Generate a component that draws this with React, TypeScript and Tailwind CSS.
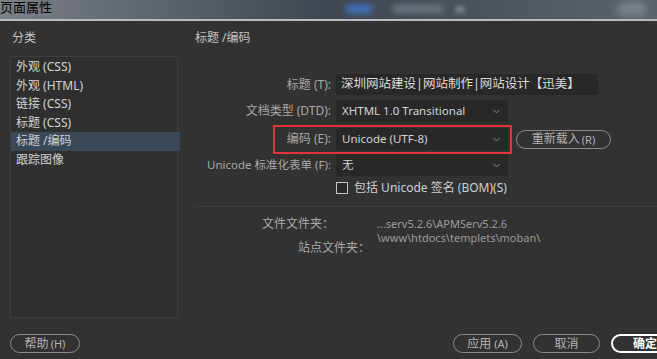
import { ChevronDown } from "lucide-react"

const font = { fontFamily: '"Noto Sans", "Noto Sans CJK SC", sans-serif' }

const categories = ["外观 (CSS)", "外观 (HTML)", "链接 (CSS)", "标题 (CSS)", "标题 /编码", "跟踪图像"]

function Select({ value, width }: { value: string; width: string }) {
  return (
    <div className={`flex h-[22px] items-center justify-between bg-[#282828] pl-[6px] pr-[6px] text-[11.5px] text-[#d4d4d4] ${width}`}>
      <span>{value}</span>
      <ChevronDown size={11} strokeWidth={2} className="text-[#8d9aa6]" />
    </div>
  )
}

function Pill({ children, w, strong }: { children: React.ReactNode; w: string; strong?: boolean }) {
  return (
    <div
      className={`flex h-[19px] items-center justify-center rounded-full text-[12px] leading-none ${w} ${
        strong ? "border-2 border-white font-semibold text-white" : "border border-[#8a8a8a] text-[#b4b4b4]"
      }`}
    >
      {children}
    </div>
  )
}

export default function App() {
  return (
    <div className="flex h-[359px] w-[657px] flex-col overflow-hidden bg-[#323232]" style={font}>
      {/* blurred window title bar */}
      <div className="relative h-[21px] shrink-0 overflow-hidden border-b-2 border-[#b8bcc2] bg-gradient-to-r from-[#7c8188] via-[#3f464f] to-[#5d636b]">
        <div className="absolute left-[345px] top-[4px] h-[10px] w-[28px] rounded-full bg-[#3f6fb8] blur-[3px]" />
        <div className="absolute left-[392px] top-[5px] h-[8px] w-[52px] rounded-full bg-[#6e7680] blur-[3px]" />
        <div className="absolute left-[455px] top-[6px] h-[7px] w-[10px] rounded-full bg-[#7a828a] blur-[2px]" />
        <div className="absolute right-[10px] top-[2px] h-[14px] w-[30px] rounded-full bg-[#7d848c] blur-[4px]" />
        <span className="relative block text-[13px] leading-[15px] text-black">页面属性</span>
      </div>

      <div className="flex flex-1">
        {/* categories */}
        <div className="flex w-[190px] shrink-0 flex-col pl-[10px] pt-[9px]">
          <div className="pl-[2px] text-[12px] leading-[16px] text-[#c4c4c4]">分类</div>
          <div className="mt-[10px] h-[262px] w-[168px] border border-[#3e3e3e] bg-[#2f2f2f] pt-[1px]">
            {categories.map((c) => (
              <div
                key={c}
                className={`h-[18.6px] pl-[5px] text-[12px] leading-[18.6px] text-[#d2d2d2] ${
                  c === "标题 /编码" ? "-mr-[3px] bg-[#3a4858]" : ""
                }`}
              >
                {c}
              </div>
            ))}
          </div>
        </div>

        {/* title / encoding */}
        <div className="flex flex-1 flex-col pl-[5px] pt-[9px]">
          <div className="text-[12px] leading-[16px] text-[#c4c4c4]">标题 /编码</div>

          <div className="mt-[28px] flex flex-col text-[12px] text-[#a8a8a8]">
            <div className="flex items-center">
              <span className="w-[141px] pr-[5px] text-right">标题 (T):</span>
              <div className="flex h-[21px] w-[262px] items-center bg-[#282828] pl-[5px] text-[12.5px] text-[#dcdcdc]">
                深圳网站建设|网站制作|网站设计【迅美】
              </div>
            </div>

            <div className="mt-[5px] flex items-center">
              <span className="w-[141px] pr-[5px] text-right">文档类型 (DTD):</span>
              <Select value="XHTML 1.0 Transitional" width="w-[172px]" />
            </div>

            <div className="relative mt-[6px] flex items-center">
              <div className="pointer-events-none absolute left-[78px] -top-[3px] h-[29px] w-[239px] border-2 border-[#e2323c]" />
              <span className="w-[141px] pr-[5px] text-right">编码 (E):</span>
              <Select value="Unicode (UTF-8)" width="w-[172px]" />
              <div className="ml-[8px]">
                <Pill w="w-[95px]">
                  重新载入 <span className="ml-[2px] text-[11px]">(R)</span>
                </Pill>
              </div>
            </div>

            <div className="mt-[4px] flex items-center">
              <span className="w-[141px] whitespace-nowrap pr-[5px] text-right text-[11.5px]">Unicode 标准化表单 (F):</span>
              <Select value="无" width="w-[172px]" />
            </div>

            <div className="mt-[3px] flex items-center pl-[141px] text-[#d0d0d0]">
              <div className="h-[12px] w-[12px] border border-[#c8c8c8] bg-[#2a2a2a]" />
              <span className="ml-[6px]">包括 Unicode 签名 (BOM)(S)</span>
            </div>
          </div>

          <div className="mt-[9px] h-px bg-[#3c3c3c]" />

          <div className="mt-[10px] flex text-[12px] text-[#a8a8a8]">
            <div className="flex w-[182px] flex-col">
              <span className="pl-[67px] leading-[14px]">文件文件夹：</span>
              <span className="mt-[10px] pl-[103px] leading-[14px]">站点文件夹：</span>
            </div>
            <div className="flex flex-col text-[11px] leading-[14px] text-[#9c9c9c]">
              <span>...serv5.2.6\APMServ5.2.6</span>
              <span>\www\htdocs\templets\moban\</span>
            </div>
          </div>
        </div>
      </div>

      {/* footer buttons */}
      <div className="flex h-[26px] shrink-0 items-start justify-between pl-[10px] pt-[1px]">
        <Pill w="w-[70px]">
          帮助 <span className="ml-[2px] text-[11px]">(H)</span>
        </Pill>
        <div className="-mr-[22px] flex gap-[11px]">
          <Pill w="w-[69px]">
            应用 <span className="ml-[3px] text-[11px]">(A)</span>
          </Pill>
          <Pill w="w-[67px]">取消</Pill>
          <Pill w="w-[68px]" strong>
            确定
          </Pill>
        </div>
      </div>
    </div>
  )
}
